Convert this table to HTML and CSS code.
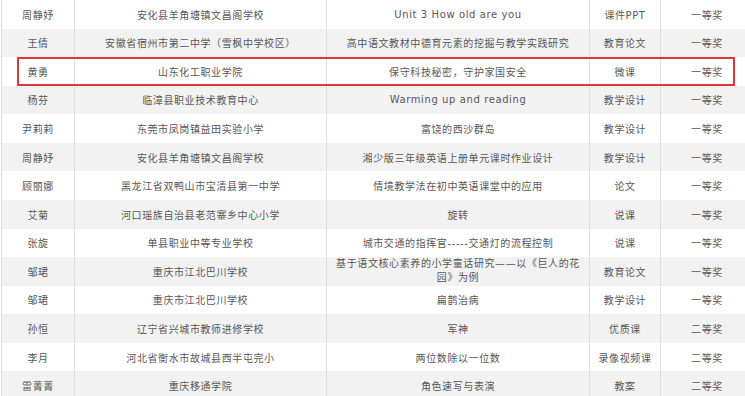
FILE: index.html
```html
<!DOCTYPE html>
<html lang="zh-CN">
<head>
<meta charset="utf-8">
<title>获奖名单</title>
<link rel="stylesheet" href="styles.css">
</head>
<body>
<div class="wrap">
  <div class="table">
    <div class="row"><div class="c">周静妤</div><div class="c">安化县羊角塘镇文昌阁学校</div><div class="c">Unit 3 How old are you</div><div class="c">课件PPT</div><div class="c">一等奖</div></div>
    <div class="row alt"><div class="c">王倩</div><div class="c">安徽省宿州市第二中学（雪枫中学校区）</div><div class="c">高中语文教材中德育元素的挖掘与教学实践研究</div><div class="c">教育论文</div><div class="c">一等奖</div></div>
    <div class="row"><div class="c">黄勇</div><div class="c">山东化工职业学院</div><div class="c">保守科技秘密，守护家国安全</div><div class="c">微课</div><div class="c">一等奖</div></div>
    <div class="row alt"><div class="c">杨芬</div><div class="c">临漳县职业技术教育中心</div><div class="c">Warming up and reading</div><div class="c">教学设计</div><div class="c">一等奖</div></div>
    <div class="row"><div class="c">尹莉莉</div><div class="c">东莞市凤岗镇益田实验小学</div><div class="c">富饶的西沙群岛</div><div class="c">教学设计</div><div class="c">一等奖</div></div>
    <div class="row alt"><div class="c">周静妤</div><div class="c">安化县羊角塘镇文昌阁学校</div><div class="c">湘少版三年级英语上册单元课时作业设计</div><div class="c">教学设计</div><div class="c">一等奖</div></div>
    <div class="row"><div class="c">顾丽娜</div><div class="c">黑龙江省双鸭山市宝清县第一中学</div><div class="c">情境教学法在初中英语课堂中的应用</div><div class="c">论文</div><div class="c">一等奖</div></div>
    <div class="row alt"><div class="c">艾菊</div><div class="c">河口瑶族自治县老范寨乡中心小学</div><div class="c">旋转</div><div class="c">说课</div><div class="c">一等奖</div></div>
    <div class="row"><div class="c">张旋</div><div class="c">单县职业中等专业学校</div><div class="c">城市交通的指挥官-----交通灯的流程控制</div><div class="c">说课</div><div class="c">一等奖</div></div>
    <div class="row alt"><div class="c">邹珺</div><div class="c">重庆市江北巴川学校</div><div class="c two">基于语文核心素养的小学童话研究——以《巨人的花<br>园》为例</div><div class="c">教育论文</div><div class="c">一等奖</div></div>
    <div class="row"><div class="c">邹珺</div><div class="c">重庆市江北巴川学校</div><div class="c">扁鹊治病</div><div class="c">教学设计</div><div class="c">一等奖</div></div>
    <div class="row alt"><div class="c">孙恒</div><div class="c">辽宁省兴城市教师进修学校</div><div class="c">军神</div><div class="c">优质课</div><div class="c">二等奖</div></div>
    <div class="row"><div class="c">李月</div><div class="c">河北省衡水市故城县西半屯完小</div><div class="c">两位数除以一位数</div><div class="c">录像视频课</div><div class="c">二等奖</div></div>
    <div class="row alt"><div class="c">雷菁菁</div><div class="c">重庆移通学院</div><div class="c">角色速写与表演</div><div class="c">教案</div><div class="c">二等奖</div></div>
  </div>
  <div class="highlight"></div>
</div>
</body>
</html>
```

FILE: styles.css
```css
html, body {
  margin: 0;
  padding: 0;
  background: #ffffff;
  overflow: hidden;
}

.wrap {
  position: relative;
  width: 745px;
  height: 396px;
  overflow: hidden;
}

.table {
  margin-left: 1px;
  width: 752px;
  border-left: 1px solid #dedede;
  font-family: "DejaVu Sans", "Noto Sans CJK SC", sans-serif;
  font-size: 10px;
  letter-spacing: 0.6px;
  color: #585858;
}

.row {
  display: grid;
  grid-template-columns: 73px 252px 263px 71px 93px;
  height: 28.57px;
  background: #ffffff;
}

.row.alt {
  background: #f2f2f2;
}

.c {
  display: flex;
  align-items: center;
  justify-content: center;
  text-align: center;
  border-right: 1px solid #dedede;
  padding: 0 4px;
  white-space: nowrap;
  overflow: hidden;
}

.c.two {
  line-height: 14px;
  white-space: normal;
}

.highlight {
  position: absolute;
  left: 17px;
  top: 57px;
  width: 714px;
  height: 25px;
  border: 2px solid #e2373a;
}
```
